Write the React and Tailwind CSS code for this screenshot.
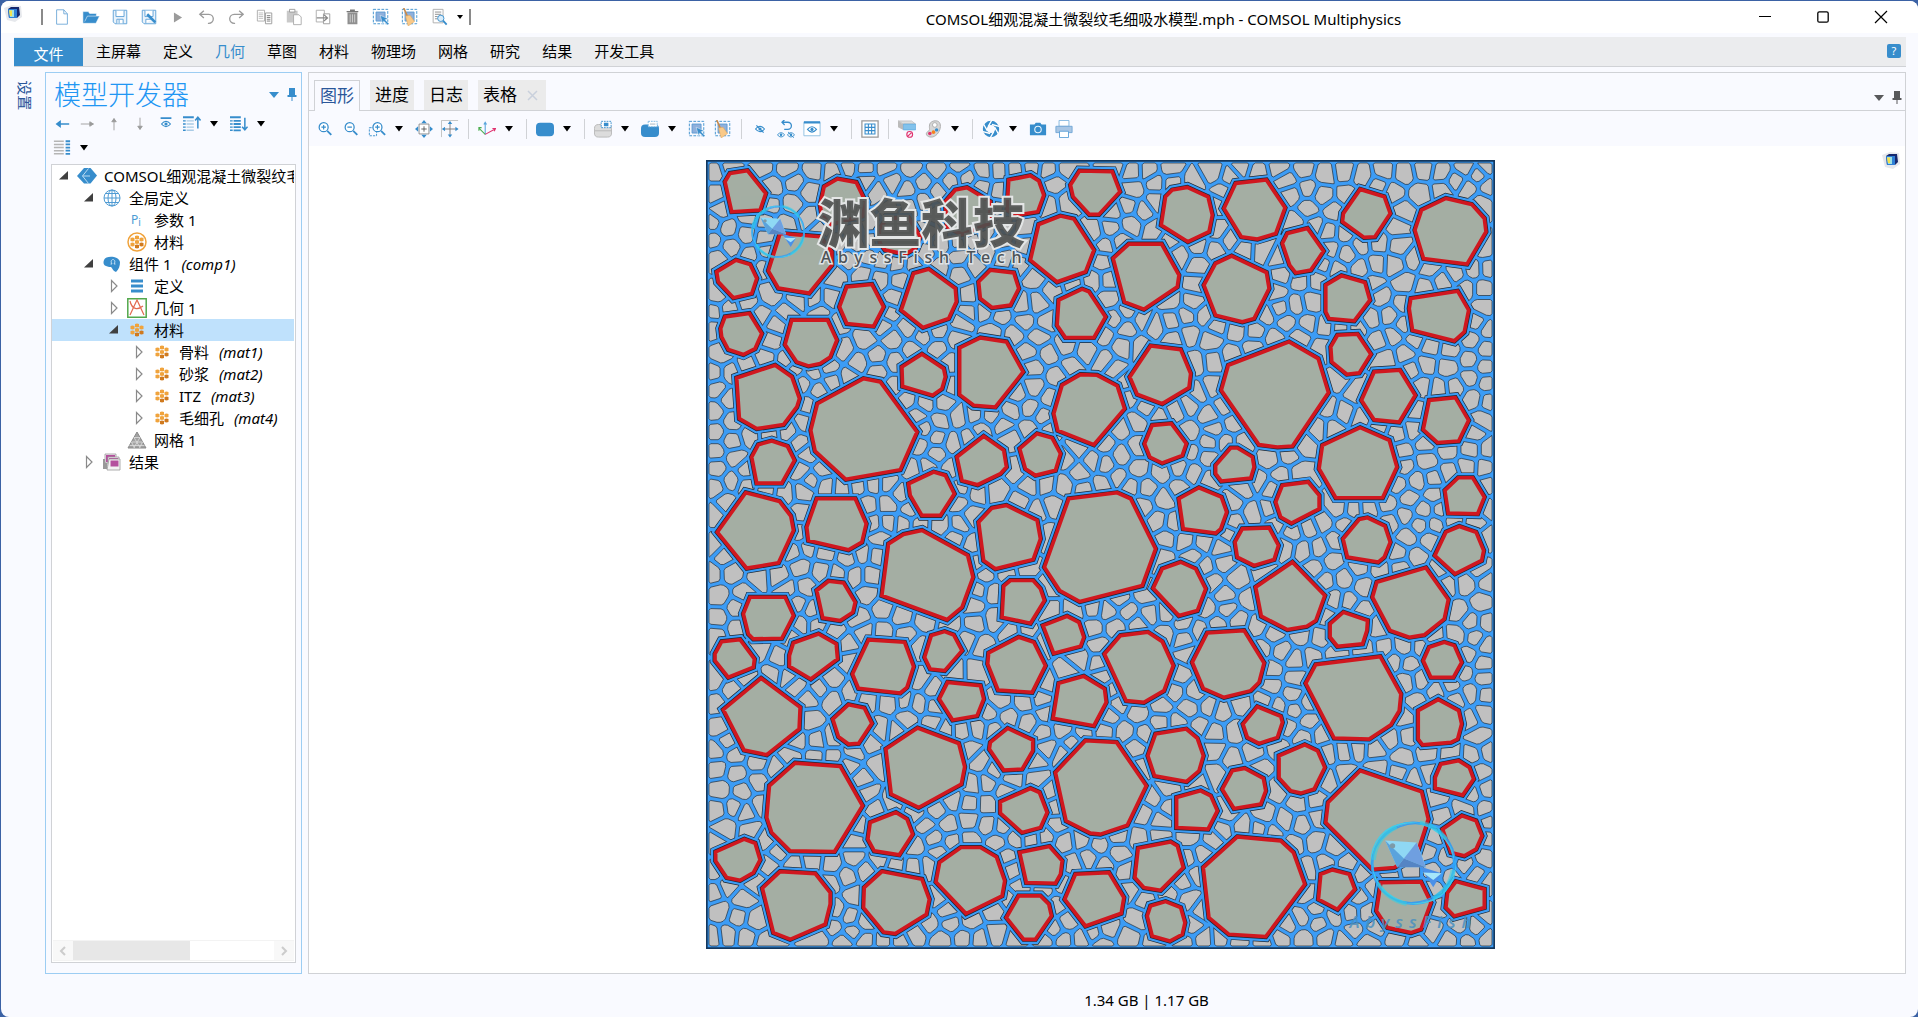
import React from "react";
import { clsx } from "clsx";

// ─── Icons ────────────────────────────────────────────────────────────────────
const BLUE = "#378dcc";
const GRAY = "#9b9b9b";

const Svg = ({ className = "w-5 h-5", children }) => (
  <svg className={clsx("block shrink-0", className)} viewBox="0 0 20 20" fill="none" aria-hidden="true">
    {children}
  </svg>
);

const Caret = () => (
  <svg className="block w-2 h-1.5" viewBox="0 0 8 6" aria-hidden="true">
    <path d="M0 0h8L4 5.500z" fill="#000" />
  </svg>
);

const Cube = ({ className }) => (
  <Svg className={className}>
    <path d="M1 5L9 2l9 1 1 11-7 5-8-2z" fill="#e6e8ec" />
    <path d="M5 6l3-2h8l1 8-3 3H6z" fill="#16286e" />
    <path d="M5 6h9v9H6z" fill="#2f7fd6" />
    <path d="M6 7h5v7H7z" fill="#9fe0e0" />
    <path d="M6 7.500h3v5.500H7z" fill="#f4e24c" />
  </Svg>
);

const SelectBox = () => (
  <>
    <path d="M1.500 1.500h16v16h-16z" stroke={BLUE} strokeDasharray="3 1.500" />
    <path d="M4.500 4.500h10v10h-10z" fill="#8fb0dc" stroke="#5a9ad2" />
  </>
);

const Eye = ({ x, y, off }) => (
  <g transform={`translate(${x} ${y})`}>
    <path d="M-5 0Q0-6 5 0Q0 6-5 0z" fill="#fff" stroke={BLUE} strokeWidth="1.300" />
    <circle r="1.800" fill={BLUE} />
    {off && <path d="M-4-4l8 8" stroke={BLUE} strokeWidth="1.300" />}
  </g>
);

const Magnifier = ({ sign = true, x = 0 }) => (
  <g transform={`translate(${x} 0)`} stroke={BLUE}>
    <circle cx="8.500" cy="8" r="5" fill="#fff" strokeWidth="1.400" />
    <path d="M12.500 12l4.500 4.500" strokeWidth="2" />
    <path d={sign ? "M6 8h5M8.500 5.500v5" : "M6 8h5"} strokeWidth="1.300" />
  </g>
);

const ICONS = {
  newFile: <path d="M4 2h8l4 4.500V18H4zM12 2v4.500h4" fill="#fff" stroke="#6fa9d8" />,
  open: <path d="M1 4h6l1.500 2H16v3h3.500l-4 8H1zM3 15l3-6h10" fill={BLUE} stroke="#fff" strokeWidth=".6" />,
  save: (
    <>
      <path d="M2.500 2.500h15v15H4.500l-2-2z" fill="#eaf3fb" stroke="#5a9fd6" />
      <path d="M5.500 3v6.500h9V3M6.500 17v-4.500h7V17M9 13v4" fill="#fff" stroke="#5a9fd6" />
    </>
  ),
  saveAs: (
    <>
      <path d="M2.500 2.500h15v15H4.500l-2-2z" fill="#eaf3fb" stroke="#5a9fd6" />
      <path d="M5.500 3v6.500h9V3M6.500 17v-4.500h7" fill="#fff" stroke="#5a9fd6" />
      <path d="M8 7l9 9" stroke={BLUE} strokeWidth="3" />
    </>
  ),
  play: <path d="M5.500 5v11l9-5.500z" fill={GRAY} />,
  undo: <path d="M6.500 3L2 7l4.500 4M2.500 7h9.500a5 5 0 010 10H11" stroke={GRAY} strokeWidth="1.500" />,
  redo: <path d="M13.500 3L18 7l-4.500 4M17.500 7H8a5 5 0 000 10h1" stroke={GRAY} strokeWidth="1.500" />,
  copy: (
    <>
      <path d="M1.500 2.500h8v12h-8z" fill="#fff" stroke="#aaa" />
      <path d="M3 5.500h5M3 7.500h5M3 9.500h5M3 11.500h5" stroke="#bbb" />
      <path d="M10.500 5.500h7v12h-7z" fill="#fff" stroke="#999" />
      <path d="M12 8.500h4M12 10.500h4M12 12.500h4M12 14.500h4" stroke="#777" />
    </>
  ),
  paste: (
    <>
      <path d="M2 3h12v13H2z" fill="#c9c9c9" />
      <path d="M5 1.500h6v3H5z" fill="#fff" stroke="#999" />
      <path d="M9.500 7.500h6l2.500 2.500v8.500H9.500z" fill="#fff" stroke="#aaa" />
    </>
  ),
  duplicate: (
    <>
      <path d="M2.500 2.500h9v13h-9z" fill="#fff" stroke="#aaa" />
      <path d="M10.500 6.500h7v11h-7z" fill="#fff" stroke="#999" />
      <path d="M3 11h11M11 7.500l4 3.500-4 3.500" stroke="#888" strokeWidth="1.400" />
    </>
  ),
  trash: (
    <>
      <path d="M5 5h11v13H5z" fill="#8f8f8f" />
      <path d="M4 4h13M8.500 4V2.500h4V4" stroke="#777" strokeWidth="1.400" />
      <path d="M8 7v9M10.500 7v9M13 7v9" stroke="#d5d5d5" />
    </>
  ),
  select: (
    <>
      <SelectBox />
      <path d="M9 8l9 4-3.500 1L19 17.500 17.500 19 13 14.500 12 18z" fill={BLUE} stroke="#fff" strokeWidth=".5" />
    </>
  ),
  clear: (
    <>
      <SelectBox />
      <path d="M3 0l4 9" stroke="#c98a4a" strokeWidth="1.800" />
      <path d="M5 9l5-1 5 7-7 5z" fill="#f9c988" stroke="#dba45c" strokeWidth=".6" />
    </>
  ),
  find: (
    <>
      <path d="M3.500 1.500h11v15h-11z" fill="#fff" stroke="#aaa" />
      <path d="M5.500 4.500h7M5.500 7h7M5.500 9.500h3M5.500 12h3" stroke="#888" />
      <circle cx="12" cy="11.500" r="3.500" fill="#d8ecfa" stroke={BLUE} />
      <path d="M14.500 14l4 4.500" stroke={BLUE} strokeWidth="2" />
    </>
  ),
  left: <path d="M4 10h14M4 10l4-3v6z" stroke={BLUE} strokeWidth="1.400" fill={BLUE} />,
  right: <path d="M2 10h14M16 10l-4-2.500v5z" stroke={GRAY} fill={GRAY} />,
  up: <path d="M10 17V4M10 4L7.500 7.500h5z" stroke={GRAY} fill={GRAY} />,
  down: <path d="M10 3v13M10 16l-2.500-3.500h5z" stroke={GRAY} fill={GRAY} />,
  show: (
    <>
      <path d="M4 3.500h12" stroke={BLUE} strokeWidth="2" />
      <Eye x={10} y={10} />
    </>
  ),
  collapse: (
    <>
      <path d="M0 2.500h12" stroke={BLUE} strokeWidth="2" />
      <path d="M0 6.500h3M0 10h3M0 13.500h3M0 17h3" stroke={BLUE} strokeWidth="1.600" />
      <path d="M4 6.500h8M4 10h8M4 13.500h8M4 17h8" stroke="#a9cbe6" strokeWidth="1.600" />
      <path d="M16.500 15V3M13.500 6l3-3.500 3 3.500" stroke={BLUE} strokeWidth="1.700" />
    </>
  ),
  expand: (
    <>
      <path d="M0 2.500h12M4 6.500h8M4 10h8M4 13.500h8M4 17h8" stroke={BLUE} strokeWidth="2" />
      <path d="M0 6.500h3M0 10h3M0 13.500h3M0 17h3" stroke={BLUE} strokeWidth="1.600" />
      <path d="M16.500 3v13M13.500 13l3 3.500 3-3.500" stroke={BLUE} strokeWidth="1.700" />
    </>
  ),
  columns: (
    <>
      <path d="M1 2.500h11M1 6h11M1 9.500h11M1 13h11M1 16.500h11" stroke="#b5b5b5" strokeWidth="1.700" />
      <path d="M14 2.500h5M14 6h5M14 9.500h5M14 13h5M14 16.500h5" stroke={BLUE} strokeWidth="2" />
    </>
  ),
  zoomIn: <Magnifier />,
  zoomOut: <Magnifier sign={false} />,
  zoomBox: (
    <>
      <path d="M1.500 8.500h8v9h-8z" stroke={BLUE} strokeDasharray="2.500 1.200" />
      <Magnifier x={2} />
    </>
  ),
  extents: (
    <>
      <path d="M4.500 4.500h11v11h-11z" fill="#fff" stroke="#888" />
      <path d="M10 7v6M7 10h6" stroke="#555" />
      <path d="M10 0l3 3.500H7zM10 20l3-3.500H7zM0 10l3.500-3v6zM20 10l-3.500-3v6z" fill={BLUE} />
    </>
  ),
  extentsSel: (
    <>
      <path d="M.5 19V.5H19" stroke="#bbb" />
      <path d="M10 2v16M2 10h16" stroke="#777" />
      <path d="M10 1l2.500 3.500h-5zM10 19.500l2.500-3.500h-5zM1 10l3.500-2.500v5zM19.500 10L16 7.500v5z" fill={BLUE} />
    </>
  ),
  axes: (
    <>
      <path d="M8 16V3M6.500 5L8 2.500 9.500 5" stroke="#5aa5dc" strokeWidth="1.200" />
      <path d="M8 16L1 9M1 12V8.500h3" stroke="#4caf50" strokeWidth="1.200" />
      <path d="M8 16l11-6M16 9.500h3.500l-1.500 3" stroke="#e0336f" strokeWidth="1.200" />
    </>
  ),
  box: <rect x="0" y="3" width="20" height="15" rx="4.500" fill={BLUE} />,
  boxTop: (
    <>
      <rect x=".5" y="5" width="19" height="14" rx="4.500" fill="#dcdcdc" stroke="#b5b5b5" />
      <path d="M1 12h18" stroke="#b5b5b5" />
      <path d="M8 1.500h11v7H8z" fill="#fff" stroke={BLUE} strokeDasharray="2 1" />
      <path d="M11 3h5v4h-5z" fill={BLUE} />
    </>
  ),
  boxHole: (
    <>
      <rect x="0" y="5" width="20" height="14" rx="4.500" fill={BLUE} />
      <path d="M8 1.500h10v6H8z" fill="#fff" stroke="#7db8e2" strokeDasharray="2 1" />
      <path d="M10 3.500h6v2h-6z" fill="#cfd6dc" />
    </>
  ),
  hide: <Eye x={10} y={10} off />,
  reset: (
    <>
      <path d="M6 2.500h6a4 4 0 010 8H8M8.500-.5l-3 3 3 3" stroke={BLUE} strokeWidth="1.400" />
      <g transform="translate(4.500 16.500) scale(.8)"><Eye x={0} y={0} /></g>
      <g transform="translate(15.500 16.500) scale(.8)"><Eye x={0} y={0} off /></g>
    </>
  ),
  view: (
    <>
      <path d="M1 2.500h18v15H1z" fill="#fff" stroke="#8bbde0" />
      <path d="M1 2.500h18" stroke={BLUE} strokeWidth="2.500" />
      <Eye x={10} y={10.5} />
    </>
  ),
  grid: (
    <>
      <path d="M1 1h18v18H1z" fill="#fff" stroke="#999" strokeWidth="1.400" />
      <path d="M4.500 4.500h11v11h-11zM8.200 4.500v11M11.800 4.500v11M4.500 8.200h11M4.500 11.800h11" stroke={BLUE} strokeWidth="1.200" />
    </>
  ),
  clip: (
    <>
      <path d="M0 1h15l4.500 3.500H6z" fill="#ddd" stroke="#aaa" strokeWidth=".6" />
      <path d="M0 1l6 4v6L0 8z" fill="#bbb" />
      <path d="M6 4.500h13.500V11H6z" fill="#82c2ec" stroke="#5aa5dc" strokeWidth=".7" />
      <circle cx="13" cy="16" r="3.200" stroke="#e0336f" strokeWidth="1.300" />
      <path d="M11 18l4-4" stroke="#e0336f" strokeWidth="1.300" />
    </>
  ),
  palette: (
    <>
      <path d="M11 1c6-1 8 3 7 8s-5 10-10 10-7-4-4-6 2-2 2-6 2-5 5-6z" fill="#d6d6d6" stroke="#aaa" />
      <circle cx="12" cy="5.500" r="2.600" fill="#fff" stroke="#aaa" />
      <circle cx="6.500" cy="15" r="2" fill="#e0336f" />
      <circle cx="10.500" cy="13.500" r="2" fill="#f58220" />
      <circle cx="14" cy="11" r="1.900" fill={BLUE} />
    </>
  ),
  aperture: (
    <>
      <circle cx="10" cy="10" r="6.800" stroke={BLUE} strokeWidth="4.600" />
      <path d="M11 0L7 7M19 7l-8-2M18 15l-4-7M9 20l4-7M1 13l8 2M2 5l4 7" stroke="#fff" strokeWidth="1.500" />
    </>
  ),
  camera: (
    <>
      <path d="M1 5h5L7.500 3h5L14 5h5v12H1z" fill={BLUE} />
      <circle cx="10" cy="10.500" r="3.600" stroke="#e9f4fc" strokeWidth="1.200" />
    </>
  ),
  printer: (
    <>
      <path d="M4.500.5h11V7h-11z" fill="#fff" stroke="#7db3de" />
      <path d="M1 7h18v7H1z" fill="#a9c6e4" stroke="#6fa5d5" />
      <path d="M5 12.500h10v7H5z" fill="#fff" stroke="#5a9fd6" />
    </>
  ),
  root: (
    <>
      <path d="M7 2h6.500l6.500 7.500-6.500 8H7L0 10z" fill={BLUE} />
      <path d="M11.500 2.500L5.500 10l6 7.500M5.500 10h7.500" stroke="#b9daf2" />
    </>
  ),
  globe: (
    <g stroke="#4f9bd3">
      <circle cx="10" cy="10" r="8" fill="#fff" />
      <ellipse cx="10" cy="10" rx="4" ry="8" />
      <path d="M10 2v16M2 10h16M3.500 5.500h13M3.500 14.500h13" />
    </g>
  ),
  params: (
    <text x="4" y="14" fill="#4a9bd4" fontFamily="Noto Sans" fontSize="12">
      P<tspan dy="2" fontSize="10">i</tspan>
    </text>
  ),
  component: (
    <>
      <path d="M2 6c2-5 15-4 16 2 0 4-1 7-4 10-3-1-3-3-5-5-5 0-9-2-7-7z" fill={BLUE} />
      <path d="M8.500 10h1.500c-2-3 0-4.500 1-4.500s3 1.500 1 4.500h1.500" stroke="#cfe6f7" strokeWidth=".9" />
    </>
  ),
  defs: <path d="M4 5h12M4 10h12M4 15h12" stroke={BLUE} strokeWidth="3" />,
  geometry: (
    <>
      <path d="M.8.8h18.400v18.400H.8z" fill="#fff" stroke="#52a84c" strokeWidth="1.500" />
      <path d="M3 17l7-15 7 15M3 3c2 9 8 9 13 5" stroke="#e26a50" strokeWidth="1.200" />
    </>
  ),
  mesh: (
    <>
      <path d="M10 2l9 16H1z" fill="#a2a2a2" stroke="#8a8a8a" />
      <path d="M7 7.500h6M4.500 12h11M2.500 15.500h15M7 7.500l6 10M13 7.500l-6 10M4.500 12l3 6M15.500 12l-3 6" stroke="#dedede" strokeWidth=".8" />
    </>
  ),
  results: (
    <>
      <path d="M1 7h4v10H1z" fill="#999" />
      <path d="M3 2h11v9H3z" fill="#f7e6f4" stroke="#999" strokeWidth=".8" />
      <path d="M4 3h9v7H4z" fill="#b4509e" />
      <path d="M6 5h11v9H6z" fill="#f7e6f4" stroke="#999" strokeWidth=".8" />
      <path d="M7 6h9v7H7z" fill="#b4509e" />
      <path d="M5 18l2-11h11v11z" fill="#f3f3f3" stroke="#999" strokeWidth=".8" />
      <path d="M8.500 8.500h8v6h-8z" fill="#b4509e" />
    </>
  ),
};

const HEXES = [[5.5, 7.5], [5.5, 12.5], [10, 5.5], [10, 10], [10, 14.5], [14.5, 7.5], [14.5, 12.5]];
const Hexes = () =>
  HEXES.map(([x, y], i) => (
    <path
      key={i}
      d={`M${x - 2} ${y - 1.4}l2-.7 2 .7v2.800l-2 .7-2-.7z`}
      fill={i === 4 || i === 6 ? "#d07a1e" : "#f0a33c"}
    />
  ));
ICONS.material = <Hexes />;
ICONS.materialRound = (
  <>
    <circle cx="10" cy="10" r="9" stroke="#f0a33c" strokeWidth="1.500" fill="#fff" />
    <Hexes />
  </>
);

const IconButton = ({ name, label, className }) => (
  <button type="button" aria-label={label ?? name} className={clsx("flex items-center justify-center shrink-0", className)}>
    <Svg className="w-[18px] h-[18px]">{ICONS[name]}</Svg>
  </button>
);

// ─── Concrete specimen: aggregates inside a polygonal mortar ──────────────────
const AGGREGATES = [
  {
    dx: 0,
    dy: 0,
    shapes: [
      "75,80 90,55 142,47 197,115 180,165 95,170",
      "360,150 372,95 412,72 468,82 497,142 487,183 390,208 365,180",
      "240,235 360,245 395,290 395,330 327,414 235,399 205,347",
      "535,225 560,190 625,188 660,245 645,280 615,297 555,285 540,265",
      "735,140 765,105 800,98 870,140 868,205 785,238 740,215",
      "925,75 990,62 1015,78 1030,120 1012,170 950,180 920,165",
      "1110,90 1137,48 1235,50 1258,110 1195,178 1167,178 1118,125",
      "1080,183 1120,192 1180,285 1155,350 1070,380 990,315 1015,208",
      "50,350 108,315 150,328 170,370 155,415 100,428 55,380",
      "62,520 75,485 148,475 185,535 165,580 130,598 85,583 65,545",
      "275,495 382,495 410,555 390,605 360,625 325,632 290,620 255,568",
      "440,395 515,388 550,455 520,513 440,505 418,455",
      "640,355 685,342 765,400 768,440 745,490 668,517 603,465",
      "870,345 940,353 955,400 930,450 875,457 840,430 835,380",
      "1075,435 1145,402 1165,410 1215,485 1180,547 1095,547 1070,510",
      "110,668 225,630 275,665 298,730 290,755 250,808 170,820 118,790",
      "490,670 540,680 650,830 600,943 437,972 345,887 332,825 352,745",
      "605,635 665,597 730,640 735,665 725,700 697,720 607,693",
      "778,578 840,548 918,560 968,650 885,755 820,750 778,718",
      "1140,658 1190,660 1250,692 1272,760 1180,868 1072,825 1060,775 1085,690",
      "155,905 175,868 215,857 262,873 283,915 245,983 170,983",
      "770,905 850,843 910,885 918,935 900,955 832,988 785,975",
      "958,880 1010,835 1055,848 1080,895 1065,945 1005,960 975,940",
      "137,1012 238,1038 272,1082 280,1125 235,1222 140,1238 52,1130",
      "350,1030 465,1030 498,1105 485,1160 445,1183 325,1155 320,1115",
      "625,985 700,950 735,960 762,1015 720,1080 665,1080 630,1020",
      "565,1165 610,1137 665,1125 802,1200 818,1265 785,1355 740,1392 545,1320",
      "835,1100 875,1058 918,1050 1010,1095 1020,1150 998,1212 885,1240 850,1215",
      "1105,1030 1250,1012 1290,1030 1365,1180 1325,1290 1138,1338 1078,1305 1032,1235",
    ],
  },
  {
    dx: 1200,
    dy: 0,
    shapes: [
      "195,125 215,105 260,97 322,125 335,180 325,230 262,260 182,210",
      "405,85 497,75 553,158 525,235 470,252 422,245 370,160",
      "778,103 850,125 868,175 822,245 790,247 725,200 728,175",
      "545,265 560,235 620,220 668,288 630,345 585,353 567,330",
      "962,165 1035,130 1112,148 1150,190 1155,230 1098,327 968,310 942,225",
      "38,310 85,267 183,267 235,360 230,395 130,462 72,440",
      "345,325 393,303 497,352 505,400 460,490 425,500 345,480 310,390",
      "675,390 722,362 792,382 807,435 760,497 685,490 675,470",
      "930,430 1070,408 1103,465 1090,530 1060,557 935,525 925,460",
      "690,575 710,540 770,537 810,597 775,653 738,657 693,620",
      "150,572 240,583 270,655 265,697 185,745 110,717 88,665",
      "383,630 565,560 652,610 683,712 575,872 530,875 475,868 362,705",
      "820,650 897,645 943,720 895,800 820,793 782,735",
      "985,735 1063,727 1103,795 1073,857 1010,862 967,823",
      "665,870 778,817 865,855 888,935 845,1027 705,1027 655,940",
      "155,810 212,805 257,865 245,900 185,923 148,905 132,865",
      "390,878 410,878 455,905 460,935 450,968 362,977 345,955 345,930",
      "1072,967 1115,967 1150,1025 1130,1075 1042,1073 1032,1005",
      "545,990 622,980 655,1020 655,1060 572,1103 540,1085 525,1040",
      "235,1030 295,997 362,1025 378,1070 360,1120 345,1133 248,1120",
      "425,1120 505,1117 533,1170 520,1212 460,1230 410,1205 403,1160",
      "775,1092 800,1087 852,1112 868,1160 850,1205 832,1220 740,1205 727,1150",
      "1035,1130 1075,1113 1125,1130 1148,1185 1142,1215 1062,1255 1002,1200",
    ],
  },
  {
    dx: 0,
    dy: 1200,
    shapes: [
      "350,105 385,77 430,82 465,140 458,170 420,195 368,187",
      "150,125 255,125 280,180 245,248 160,250 145,235 130,175",
      "910,92 930,75 998,75 1020,100 1032,135 990,203 905,185",
      "1028,210 1100,182 1135,200 1150,245 1140,272 1060,293",
      "45,295 65,258 120,252 163,310 160,335 85,365 45,315",
      "280,262 355,235 408,265 412,310 332,370 268,332 268,300",
      "505,253 613,260 640,333 620,395 600,412 475,398 457,355",
      "693,240 733,228 760,238 785,285 733,345 690,340 673,305",
      "865,292 955,245 1000,260 1035,330 995,410 893,403 862,325",
      "742,380 840,390 850,430 830,480 757,493 717,430",
      "1075,383 1150,362 1212,400 1217,440 1180,510 1058,488",
      "183,368 300,455 297,520 200,597 132,583 70,462",
      "398,490 445,447 492,457 515,503 475,563 445,565 415,543",
      "557,580 652,517 775,563 793,633 783,685 655,755 573,715",
      "870,560 922,518 997,553 997,585 965,640 910,643 867,580",
      "285,622 420,632 487,750 403,887 270,885 215,830 200,785 208,690",
      "900,738 990,698 1017,710 1040,770 1020,815 965,830 900,772",
      "510,800 587,770 620,790 637,835 597,897 522,885 503,850",
      "47,888 133,850 165,862 180,912 160,950 120,973 80,965 47,915",
      "782,875 840,875 888,903 913,975 905,1020 797,1073 707,978 718,920",
      "958,890 1047,872 1085,915 1080,955 1065,982 978,980",
      "240,947 345,953 390,1010 390,1045 375,1105 270,1150 220,1130 187,997",
      "545,947 665,970 687,1030 678,1075 585,1133 550,1128 490,1055 492,995",
      "955,1020 1020,1020 1045,1045 1053,1080 1005,1150 970,1150 918,1085",
      "1125,955 1225,950 1270,1025 1262,1072 1155,1110 1093,1030",
      "1155,555 1248,560 1337,690 1280,808 1200,835 1170,832 1097,795 1065,650",
    ],
  },
  {
    dx: 1200,
    dy: 1200,
    shapes: [
      "185,40 240,20 285,40 315,100 290,165 235,180 158,98",
      "575,20 672,120 645,195 618,212 560,222 482,182 465,95",
      "828,80 975,37 1042,132 1030,190 970,238 925,245 868,225 815,125",
      "688,205 728,170 800,195 798,225 785,265 710,272 688,245",
      "60,240 142,230 185,258 218,330 190,405 130,440 77,435 12,295",
      "320,232 430,225 490,322 475,380 450,405 370,425 308,398 275,320",
      "645,327 838,303 900,415 895,465 870,507 805,550 700,547 615,383",
      "985,275 1030,260 1060,270 1082,320 1057,365 990,365 967,315",
      "952,465 1012,432 1073,465 1082,505 1070,550 1050,560 965,567 952,550",
      "470,453 540,482 545,500 530,545 475,563 440,545 427,505",
      "165,535 257,520 290,548 308,600 295,645 258,677 162,660 142,600",
      "535,600 612,567 650,585 672,635 640,700 600,712 570,705 535,667",
      "395,645 432,638 488,668 495,705 480,745 400,758 365,700",
      "228,725 300,705 330,720 350,765 322,820 228,815",
      "1020,625 1073,615 1105,635 1118,670 1085,718 1003,697 1003,665",
      "778,645 962,708 982,790 948,895 880,935 815,940 675,800 682,740",
      "1025,820 1083,780 1125,795 1143,840 1125,880 1090,900 1050,890",
      "410,843 540,855 578,890 612,985 495,1142 385,1135 325,1085 308,935",
      "113,877 210,858 230,870 248,935 180,1003 130,995 103,965",
      "660,955 695,942 745,955 762,1000 710,1060 653,1030",
      "840,980 960,978 990,1040 960,1120 930,1130 860,1115 827,1065",
      "1065,977 1150,1000 1150,1055 1060,1080 1035,1055 1040,1010",
      "150,1050 195,1037 240,1055 253,1100 245,1135 208,1155 155,1140 140,1080",
    ],
  },
];

const LEFT = 18;
const TOP = 15;
const SIDE = 2364;

const STONES = AGGREGATES.flatMap(({ dx, dy, shapes }) =>
  shapes.map((s) => s.split(" ").map((p) => p.split(",").map(Number)).map(([x, y]) => [x + dx, y + dy]))
);

const toPath = (poly) => `M${poly.map(([x, y]) => `${Math.round(x)} ${Math.round(y)}`).join("L")}Z`;
const STONE_PATH = STONES.map(toPath).join("");

function insideStone(x, y, margin) {
  return STONES.some((poly) => {
    let inside = false;
    for (let i = 0, j = poly.length - 1; i < poly.length; j = i++) {
      const [ax, ay] = poly[i];
      const [bx, by] = poly[j];
      if (ay > y !== by > y && x < ((bx - ax) * (y - ay)) / (by - ay) + ax) inside = !inside;
      const len2 = (bx - ax) ** 2 + (by - ay) ** 2;
      const t = Math.max(0, Math.min(1, ((x - ax) * (bx - ax) + (y - ay) * (by - ay)) / len2));
      if (Math.hypot(x - ax - t * (bx - ax), y - ay - t * (by - ay)) < margin) return true;
    }
    return inside;
  });
}

// keep the part of poly where (p - m) . n <= 0
function clipHalf(poly, mx, my, nx, ny) {
  const out = [];
  for (let i = 0; i < poly.length; i++) {
    const a = poly[i];
    const b = poly[(i + 1) % poly.length];
    const da = (a[0] - mx) * nx + (a[1] - my) * ny;
    const db = (b[0] - mx) * nx + (b[1] - my) * ny;
    if (da <= 0) out.push(a);
    if (da <= 0 !== db <= 0) {
      const t = da / (da - db);
      out.push([a[0] + t * (b[0] - a[0]), a[1] + t * (b[1] - a[1])]);
    }
  }
  return out;
}

function voronoi(seeds, inset, edge) {
  return seeds.map(([x, y]) => {
    const x0 = Math.max(LEFT + edge, x - 70);
    const x1 = Math.min(LEFT + SIDE - edge, x + 70);
    const y0 = Math.max(TOP + edge, y - 70);
    const y1 = Math.min(TOP + SIDE - edge, y + 70);
    let poly = [[x0, y0], [x1, y0], [x1, y1], [x0, y1]];
    for (const [sx, sy] of seeds) {
      const d = Math.hypot(sx - x, sy - y);
      if (d === 0 || d > 200) continue;
      const nx = (sx - x) / d;
      const ny = (sy - y) / d;
      poly = clipHalf(poly, x + nx * (d / 2 - inset), y + ny * (d / 2 - inset), nx, ny);
    }
    return poly;
  });
}

// cut every corner a little so the cells look rounded
function bevel(poly, size) {
  return poly.flatMap((p, i) => {
    const prev = poly[(i + poly.length - 1) % poly.length];
    const next = poly[(i + 1) % poly.length];
    return [prev, next].map((q) => {
      const d = Math.hypot(q[0] - p[0], q[1] - p[1]) || 1;
      const t = Math.min(size / d, 0.4);
      return [p[0] + (q[0] - p[0]) * t, p[1] + (q[1] - p[1]) * t];
    });
  });
}

function buildCells() {
  let state = 20240;
  const rand = () => {
    state = (state * 1664525 + 1013904223) % 4294967296;
    return state / 4294967296;
  };
  let seeds = [];
  for (let i = 0; i < 40000; i++) {
    const x = LEFT + 14 + rand() * (SIDE - 28);
    const y = TOP + 14 + rand() * (SIDE - 28);
    if (seeds.some(([sx, sy]) => (sx - x) ** 2 + (sy - y) ** 2 < 43 * 43)) continue;
    if (insideStone(x, y, 20)) continue;
    seeds.push([x, y]);
  }
  // one relaxation step evens out the cell shapes
  seeds = voronoi(seeds, 0, 0).map((poly, i) => {
    const cx = poly.reduce((s, p) => s + p[0], 0) / poly.length;
    const cy = poly.reduce((s, p) => s + p[1], 0) / poly.length;
    return insideStone(cx, cy, 20) ? seeds[i] : [cx, cy];
  });
  return voronoi(seeds, 6, 9)
    .filter((poly) => poly.length > 2)
    .map((poly) => toPath(bevel(poly, 5)))
    .join("");
}

const CELL_PATH = buildCells();

const FishLogo = () => (
  <>
    <g fill="none" opacity=".9">
      <circle r="122" stroke="#2aa5ff" strokeWidth="6" />
      <ellipse rx="128" ry="118" stroke="#3fd0f0" strokeWidth="4" transform="rotate(30)" />
      <ellipse rx="117" ry="126" stroke="#2f9df5" strokeWidth="4" transform="rotate(70)" />
      <path d="M-118-10A118 118 0 01-50-108M118 20A118 118 0 0160 105M-20 122A118 118 0 01-105 60M20-122A124 124 0 01100-72" stroke="#2fd3e6" strokeWidth="12" opacity=".6" />
    </g>
    <path d="M-84-68L10-62 28-18 38 12-48 12z" fill="#8fd8f4" />
    <path d="M-84-68L-28-14-48 12z" fill="#5aa3dc" />
    <path d="M-28-14L10-62 38 12z" fill="#6f9fe0" />
    <path d="M-28-14L38 12H-48z" fill="#5585c4" />
    <path d="M20 10L85 30 60 72z" fill="#4a90e8" />
    <path d="M85 30L28 28 60 50z" fill="#a6e6fa" />
    <circle cx="-62" cy="-52" r="8" fill="#7d9aa8" />
  </>
);

const Specimen = () => (
  <svg
    className="block h-full max-w-full"
    viewBox={`${LEFT} ${TOP} ${SIDE} ${SIDE}`}
    strokeLinejoin="miter"
    role="img"
    aria-label="几何 1"
  >
    <clipPath id="cells">
      <path d={CELL_PATH} />
    </clipPath>
    <path d={`M${LEFT} ${TOP}h${SIDE}v${SIDE}h${-SIDE}z`} fill="#3c9cf5" stroke="#14375c" strokeWidth="10" />
    <path d={CELL_PATH} fill="#c0c0c0" stroke="#1c2733" strokeWidth="2" />
    <path d={STONE_PATH} stroke="#1c2733" strokeWidth="32" fill="none" clipPath="url(#cells)" />
    <path d={STONE_PATH} stroke="#3c9cf5" strokeWidth="28" fill="none" />
    <path d={STONE_PATH} stroke="#1c2733" strokeWidth="15" fill="none" />
    <path d={STONE_PATH} stroke="#d0171f" strokeWidth="11" fill="#a4aea3" />

    <g transform="translate(234 230) scale(.63)">
      <FishLogo />
    </g>
    <g fontFamily="Noto Sans CJK SC, sans-serif" paintOrder="stroke">
      <text x="353" y="264" fontSize="155" fontWeight="900" fill="#4d4f4e" fillOpacity=".9" stroke="#e4e6e6" strokeWidth="12">
        渊鱼科技
      </text>
      <text x="362" y="325" className="tracking-[20px]" fontFamily="Noto Sans, sans-serif" fontWeight="500" fontSize="48" fill="#4d5358" stroke="#dfe3e6" strokeWidth="9">
        AbyssFish Tech
      </text>
    </g>
    <g transform="translate(2137 2122)">
      <FishLogo />
    </g>
    <text x="1946" y="2316" className="tracking-[18px]" fontFamily="Noto Sans, sans-serif" fontStyle="italic" fontWeight="600" fontSize="50" fill="#4a90c0" fillOpacity=".85">
      AbyssFish
    </text>
  </svg>
);

// ─── Window chrome ────────────────────────────────────────────────────────────
const QUICK = ["newFile", "open", "save", "saveAs", "play", "undo", "redo", "copy", "paste", "duplicate", "trash", "select", "clear", "find"];
const MENU = ["主屏幕", "定义", "几何", "草图", "材料", "物理场", "网格", "研究", "结果", "开发工具"];

const TitleBar = () => (
  <header className="flex items-start h-8 shrink-0 bg-white">
    <Cube className="w-5 h-5 ml-0.5 mt-0.5" />
    <div className="flex items-center h-8 ml-[18px]">
      <span className="w-0.5 h-4 mr-1 bg-[#8a8a8a]" />
      {QUICK.map((name) => (
        <IconButton key={name} name={name} className="w-[29px] h-8" />
      ))}
      <button type="button" aria-label="自定义快速访问工具栏" className="px-1">
        <svg className="block w-1.5 h-1" viewBox="0 0 6 4"><path d="M0 0h6L3 4z" fill="#000" /></svg>
      </button>
      <span className="w-0.5 h-4 ml-0.5 bg-[#8a8a8a]" />
    </div>
    <h1 className="flex-1 pl-[120px] pt-[6px] text-center text-[15px] leading-6 truncate">
      COMSOL细观混凝土微裂纹毛细吸水模型.mph - COMSOL Multiphysics
    </h1>
    <div className="flex h-8 pr-2">
      <button type="button" aria-label="最小化" className="flex items-center justify-center w-[58px]">
        <svg className="w-3 h-3" viewBox="0 0 12 12"><path d="M0 5.500h12" stroke="#000" /></svg>
      </button>
      <button type="button" aria-label="最大化" className="flex items-center justify-center w-[58px]">
        <svg className="w-3 h-3" viewBox="0 0 12 12"><rect x=".8" y=".8" width="10.400" height="10.400" rx="1.500" stroke="#000" strokeWidth="1.300" fill="none" /></svg>
      </button>
      <button type="button" aria-label="关闭" className="flex items-center justify-center w-[58px]">
        <svg className="w-3.5 h-3.5" viewBox="0 0 14 14"><path d="M1 1l12 12M13 1L1 13" stroke="#000" strokeWidth="1.200" /></svg>
      </button>
    </div>
  </header>
);

const MenuBar = () => (
  <nav className="flex items-center h-[30px] mt-1 ml-[13px] mr-3 shrink-0 bg-[#ebecee] border-b border-[#d0d2d6] text-[15px] leading-5">
    <button type="button" className="w-[69px] h-7 pt-1 bg-[#378dcc] text-white">文件</button>
    <div className="flex ml-[2px] pb-0.5">
      {MENU.map((m) => (
        <button key={m} type="button" className={clsx("px-[11px]", m === "几何" && "text-[#378dcc]")}>
          {m}
        </button>
      ))}
    </div>
    <button type="button" aria-label="帮助" className="ml-auto mr-[5px] mb-0.5 w-3.5 h-3.5 rounded-xs bg-[#378dcc] text-white text-[11px] leading-[14px]">
      ?
    </button>
  </nav>
);

const Pin = ({ className }) => (
  <svg className={clsx("block w-2.5 h-3.5", className)} viewBox="0 0 10 14" aria-hidden="true">
    <path d="M2 0h6v7h1.500v2h-4v4h-1V9h-4V7H2z" fill="currentColor" />
  </svg>
);

const PanelTools = ({ className }) => (
  <div className={clsx("flex items-center gap-2", className)}>
    <button type="button" aria-label="面板菜单">
      <svg className="block w-2.5 h-1.5" viewBox="0 0 10 6"><path d="M0 0h10L5 6z" fill="currentColor" /></svg>
    </button>
    <button type="button" aria-label="固定">
      <Pin />
    </button>
  </div>
);

// ─── Model builder ────────────────────────────────────────────────────────────
const TREE = [
  { level: 0, open: true, icon: "root", label: "COMSOL细观混凝土微裂纹毛细吸水模型.mph" },
  { level: 1, open: true, icon: "globe", label: "全局定义" },
  { level: 2, icon: "params", label: "参数 1" },
  { level: 2, icon: "materialRound", label: "材料" },
  { level: 1, open: true, icon: "component", label: "组件 1", tag: "(comp1)" },
  { level: 2, open: false, icon: "defs", label: "定义" },
  { level: 2, open: false, icon: "geometry", label: "几何 1" },
  { level: 2, open: true, icon: "material", label: "材料", selected: true },
  { level: 3, open: false, icon: "material", label: "骨料", tag: "(mat1)" },
  { level: 3, open: false, icon: "material", label: "砂浆", tag: "(mat2)" },
  { level: 3, open: false, icon: "material", label: "ITZ", tag: "(mat3)" },
  { level: 3, open: false, icon: "material", label: "毛细孔", tag: "(mat4)" },
  { level: 2, icon: "mesh", label: "网格 1" },
  { level: 1, open: false, icon: "results", label: "结果" },
];

const TreeRow = ({ level, open, icon, label, tag, selected }) => (
  <li
    role="treeitem"
    aria-level={level + 1}
    aria-expanded={open}
    aria-selected={!!selected}
    className={clsx("flex items-center h-[22px] text-[15px] leading-[22px] whitespace-nowrap", selected && "bg-[#bfe1fc]")}
    style={{ paddingLeft: 5 + level * 25 }}
  >
    <svg className="block w-3.5 h-3.5 shrink-0 mr-1.5" viewBox="0 0 14 14" aria-hidden="true">
      {open === true && <path d="M11 2v8.500H2z" fill="#404040" />}
      {open === false && <path d="M4.500 1.500v11L10 7z" fill="#fff" stroke="#8a8a8a" strokeWidth="1.200" />}
    </svg>
    <Svg>{ICONS[icon]}</Svg>
    <span className="pl-[7px]">{label}</span>
    {tag && <span className="pl-2.5 italic">{tag}</span>}
  </li>
);

const SmallCaret = () => (
  <button type="button" aria-label="更多" className="flex items-center w-[21px] h-6 pl-[5px]">
    <Caret />
  </button>
);

const ModelBuilder = () => (
  <section className="flex flex-col w-[257px] shrink-0 border border-[#9ccdf3]">
    <div className="flex items-center h-[39px] pt-1 pl-2 pr-1">
      <h2 className="text-[27px] leading-9 font-light text-[#2196f3]">模型开发器</h2>
      <PanelTools className="ml-auto text-[#378dcc]" />
    </div>
    <div className="flex flex-wrap items-center pl-[3px]">
      {["left", "right", "up", "down", "show", "collapse"].map((n) => (
        <IconButton key={n} name={n} className="w-[26px] h-6" />
      ))}
      <SmallCaret />
      <IconButton name="expand" className="w-[26px] h-6" />
      <SmallCaret />
      <div className="flex w-full">
        <IconButton name="columns" className="w-[26px] h-6" />
        <SmallCaret />
      </div>
    </div>
    <div className="flex flex-col flex-1 min-h-0 mt-1 mx-[5px] mb-2.5 border border-[#d0d2d6] bg-white overflow-hidden">
      <ul role="tree" aria-label="模型树" className="flex-1 mr-px overflow-hidden">
        {TREE.map((node, i) => (
          <TreeRow key={i} {...node} />
        ))}
      </ul>
      <div className="flex h-[21px] mx-px mb-px border-y border-[#f3f3f3]">
        <button type="button" aria-label="向左滚动" className="flex items-center justify-center w-5 bg-[#f8f8f8]">
          <svg className="w-2 h-2.5" viewBox="0 0 8 10"><path d="M6 1L2 5l4 4" stroke="#ccc" strokeWidth="2" fill="none" /></svg>
        </button>
        <div className="flex-1 bg-white">
          <div className="w-[58%] h-full bg-[#e7e7e7]" />
        </div>
        <button type="button" aria-label="向右滚动" className="flex items-center justify-center w-5 bg-[#f8f8f8]">
          <svg className="w-2 h-2.5" viewBox="0 0 8 10"><path d="M2 1l4 4-4 4" stroke="#ccc" strokeWidth="2" fill="none" /></svg>
        </button>
      </div>
    </div>
  </section>
);

// ─── Graphics window ──────────────────────────────────────────────────────────
// "v" is a drop-down arrow, "|" a divider
const TOOLBAR = [
  "zoomIn", "zoomOut", "zoomBox", "v", "extents", "extentsSel", "|", "axes", "v", "|", "box", "v", "|",
  "boxTop", "v", "boxHole", "v", "select", "clear", "|", "hide", "reset", "view", "v", "|", "grid", "|",
  "clip", "palette", "v", "|", "aperture", "v", "camera", "printer",
];

const Graphics = () => (
  <section className="flex flex-col flex-1 min-w-0 border border-[#d0d2d6]">
    <div className="flex items-end h-[38px] shrink-0 pl-[5px] border-b border-[#d0d2d6] text-[17px] leading-[30px]">
      <div role="tablist" className="flex gap-2.5">
        <button type="button" role="tab" aria-selected="true" className="h-[31px] -mb-px px-[5px] border border-b-0 border-[#d0d2d6] bg-[#f9faff] text-[#2b579a]">
          图形
        </button>
        <button type="button" role="tab" className="h-[30px] px-[5px] bg-[#ebebeb]">进度</button>
        <button type="button" role="tab" className="h-[30px] px-[5px] bg-[#ebebeb]">日志</button>
        <button type="button" role="tab" className="flex items-center h-[30px] pl-[5px] pr-2 gap-2.5 bg-[#ebebeb]">
          表格
          <svg className="w-[11px] h-[11px]" viewBox="0 0 11 11"><path d="M1 1l9 9M10 1l-9 9" stroke="#c9d0dc" strokeWidth="1.500" /></svg>
        </button>
      </div>
      <PanelTools className="h-6 ml-auto mr-[3px] text-[#58595b]" />
    </div>
    <div role="toolbar" aria-label="图形工具" className="flex items-center h-[35px] shrink-0 pl-[3px]">
      {TOOLBAR.map((name, i) => {
        if (name === "v") return <SmallCaret key={i} />;
        if (name === "|") return <span key={i} className="w-px h-5 mx-[5px] bg-[#d0d2d6]" />;
        return <IconButton key={i} name={name} className="w-[26px] h-6" />;
      })}
    </div>
    <div className="relative flex flex-1 min-h-0 justify-center pt-3.5 pb-6 pr-3.5 bg-white">
      <Specimen />
      <Cube className="absolute top-1 right-1 w-5 h-5" />
    </div>
  </section>
);

export default function App() {
  return (
    <div className="h-screen bg-[#3b62a5] font-['Noto_Sans','Noto_Sans_CJK_SC',sans-serif] text-black">
      <div className="h-full pt-px pl-px">
        <div className="flex flex-col h-full rounded-lg overflow-hidden bg-[#f9faff]">
          <TitleBar />
          <MenuBar />
          <main className="flex flex-1 min-h-0 gap-1.5 mt-[5px] mr-3">
            <aside className="w-[38px] shrink-0 pt-[7px] pl-3">
              <button type="button" className="flex items-center justify-center w-6 h-8 text-[15px] text-[#2b579a]">
                <span className="rotate-90 whitespace-nowrap">设置</span>
              </button>
            </aside>
            <ModelBuilder />
            <Graphics />
          </main>
          <footer className="flex items-center justify-center h-[43px] pt-2 pl-[374px] shrink-0 text-[15px] leading-6">
            1.34 GB | 1.17 GB
          </footer>
        </div>
      </div>
    </div>
  );
}
